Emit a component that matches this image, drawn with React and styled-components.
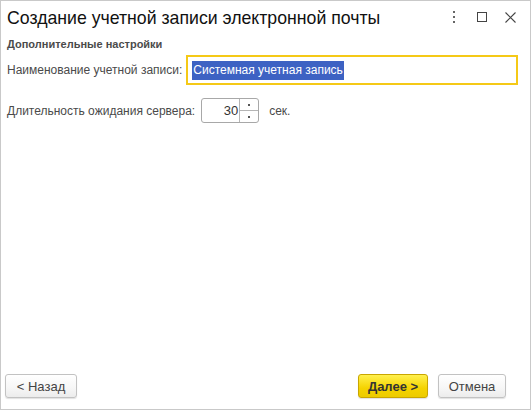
import React from "react";
import styled, { createGlobalStyle } from "styled-components";

const Global = createGlobalStyle`
  html, body { margin: 0; padding: 0; background: #fff; }
  body { font-family: "Liberation Sans", Arial, sans-serif; }
  * { box-sizing: border-box; }
`;

const Window = styled.div`
  width: 531px;
  height: 410px;
  border: 1px solid #c9c9c9;
  background: #fff;
  display: flex;
  flex-direction: column;
`;

const TitleBar = styled.div`
  height: 32px;
  display: flex;
  align-items: center;
  padding: 0 0 0 6px;
`;

const Title = styled.h1`
  flex: 1;
  margin: 0;
  font-size: 17.7px;
  font-weight: normal;
  color: #111;
  line-height: 22px;
  padding-top: 1px;
`;

const TitleIcons = styled.div`
  display: flex;
  align-items: center;
  margin-right: 6px;
`;

const IconBtn = styled.div`
  width: 28px;
  height: 28px;
  display: flex;
  align-items: center;
  justify-content: center;
`;

const Content = styled.div`
  flex: 1;
  padding: 3px 6px 0 6px;
  display: flex;
  flex-direction: column;
`;

const Group = styled.div`
  font-size: 11px;
  font-weight: bold;
  color: #4b4b4b;
  height: 16px;
  line-height: 16px;
  margin-bottom: 3px;
`;

const Row = styled.div`
  display: flex;
  align-items: center;
  margin-top: ${(p) => p.$mt || 0}px;
`;

const Label = styled.span`
  font-size: 12px;
  color: #4a4a4a;
  white-space: nowrap;
  margin-right: ${(p) => p.$mr || 4}px;
`;

const TextField = styled.div`
  flex: 1;
  height: 30px;
  border: 2px solid #f5c917;
  margin-right: 6px;
  display: flex;
  align-items: center;
  padding-left: 4px;
`;

const Selected = styled.span`
  background: #3d62c3;
  color: #fff;
  font-size: 12px;
  line-height: 19px;
  padding: 0 1px;
`;

const Spin = styled.div`
  width: 58px;
  height: 25px;
  border: 1px solid #a8a8a8;
  border-radius: 3px;
  display: flex;
  overflow: hidden;
`;

const SpinValue = styled.div`
  flex: 1;
  text-align: right;
  font-size: 13px;
  color: #333;
  line-height: 23px;
  padding-right: 1px;
`;

const SpinButtons = styled.div`
  width: 19px;
  border-left: 1px solid #b5b5b5;
  display: flex;
  flex-direction: column;
`;

const SpinBtn = styled.div`
  flex: 1;
  display: flex;
  align-items: center;
  justify-content: center;
  border-top: ${(p) => (p.$bottom ? "1px solid #b5b5b5" : "none")};
  &::after {
    content: "";
    width: 2px;
    height: 2px;
    background: #555;
  }
`;

const Unit = styled.span`
  font-size: 12px;
  color: #4a4a4a;
  margin-left: 10px;
`;

const Footer = styled.div`
  display: flex;
  align-items: center;
  padding: 0 24px 11px 4px;
  gap: 10px;
`;

const Spacer = styled.div`
  flex: 1;
`;

const Button = styled.button`
  height: 24px;
  width: ${(p) => p.$w}px;
  font-family: "Liberation Sans", Arial, sans-serif;
  font-size: 13px;
  font-weight: ${(p) => (p.$primary ? "bold" : "normal")};
  color: ${(p) => (p.$primary ? "#333" : "#444")};
  border: 1px solid ${(p) => (p.$primary ? "#c9a600" : "#c2c2c2")};
  border-radius: 3px;
  background: ${(p) =>
    p.$primary
      ? "linear-gradient(#fff04d, #f5d300 60%, #eccb00)"
      : "linear-gradient(#ffffff, #f6f6f6 60%, #ececec)"};
  box-shadow: 0 1px 1px rgba(0, 0, 0, 0.12);
  padding: 0;
`;

export default function App() {
  return (
    <>
      <Global />
      <Window>
        <TitleBar>
          <Title>Создание учетной записи электронной почты</Title>
          <TitleIcons>
            <IconBtn>
              <svg width="4" height="12" viewBox="0 0 4 12">
                <rect x="1" y="0" width="2" height="2" fill="#666" />
                <rect x="1" y="5" width="2" height="2" fill="#666" />
                <rect x="1" y="10" width="2" height="2" fill="#666" />
              </svg>
            </IconBtn>
            <IconBtn>
              <svg width="10" height="10" viewBox="0 0 10 10">
                <rect x="0.5" y="0.5" width="9" height="9" fill="none" stroke="#444" strokeWidth="1" />
              </svg>
            </IconBtn>
            <IconBtn>
              <svg width="11" height="11" viewBox="0 0 11 11">
                <path d="M0.5 0.5 L10.5 10.5 M10.5 0.5 L0.5 10.5" stroke="#444" strokeWidth="1.1" />
              </svg>
            </IconBtn>
          </TitleIcons>
        </TitleBar>
        <Content>
          <Group>Дополнительные настройки</Group>
          <Row>
            <Label $mr={4}>Наименование учетной записи:</Label>
            <TextField>
              <Selected>Системная учетная запись</Selected>
            </TextField>
          </Row>
          <Row $mt={13}>
            <Label $mr={6}>Длительность ожидания сервера:</Label>
            <Spin>
              <SpinValue>30</SpinValue>
              <SpinButtons>
                <SpinBtn />
                <SpinBtn $bottom />
              </SpinButtons>
            </Spin>
            <Unit>сек.</Unit>
          </Row>
        </Content>
        <Footer>
          <Button $w={72}>&lt; Назад</Button>
          <Spacer />
          <Button $w={70} $primary>Далее &gt;</Button>
          <Button $w={68}>Отмена</Button>
        </Footer>
      </Window>
    </>
  );
}
